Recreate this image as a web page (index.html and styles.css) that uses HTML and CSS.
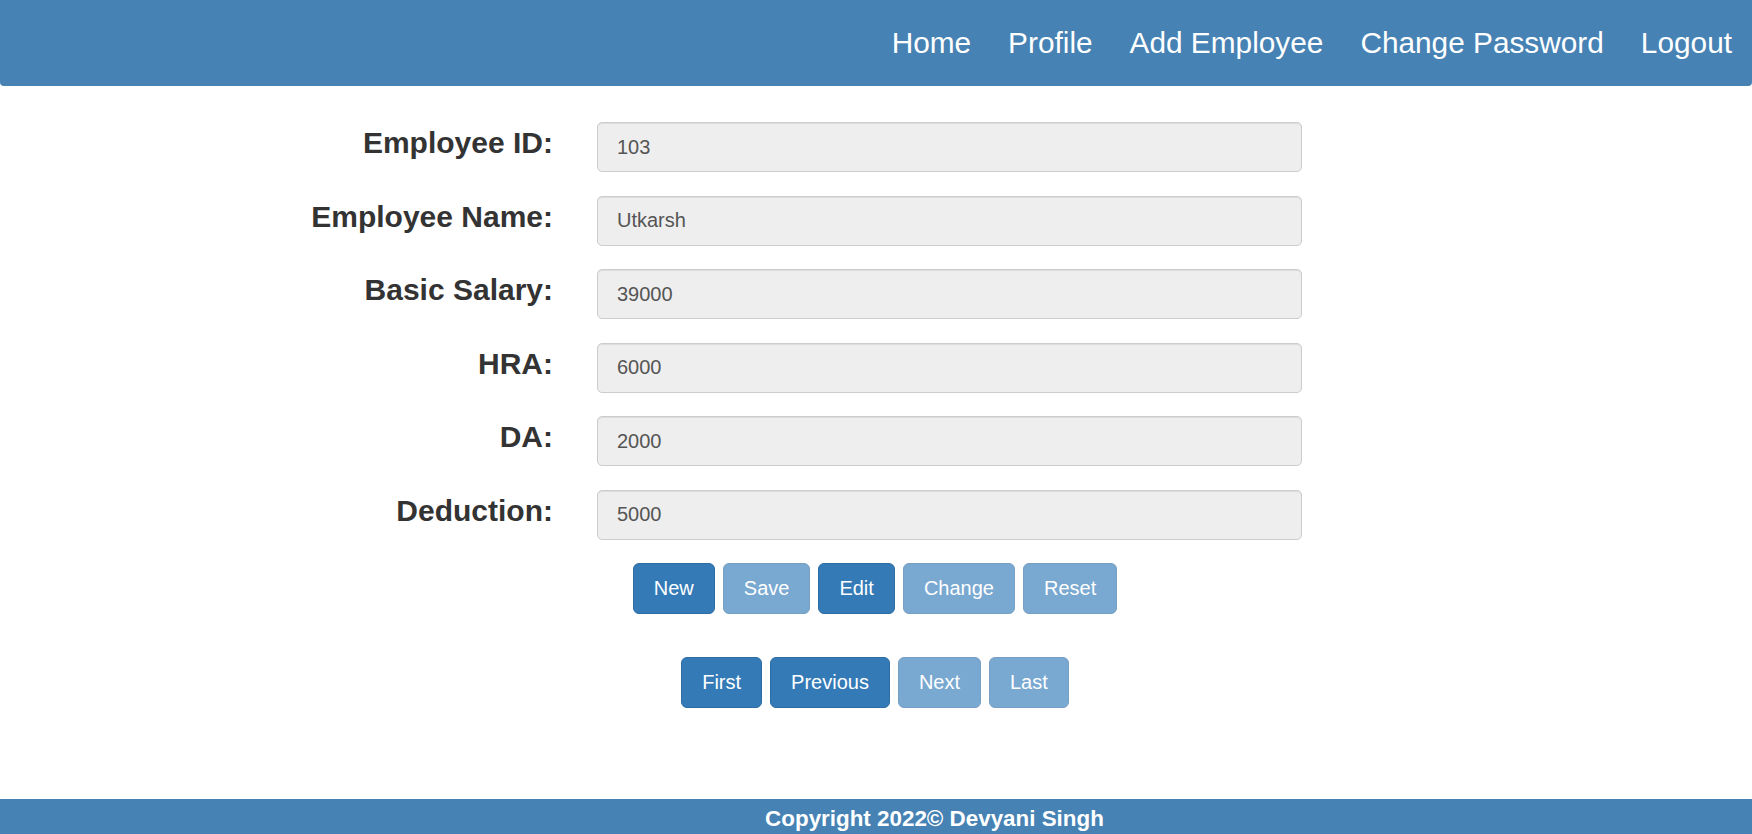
FILE: index.html
```html
<!DOCTYPE html>
<html lang="en">
<head>
<meta charset="utf-8">
<title>Employee</title>
<link rel="stylesheet" href="styles.css">
</head>
<body>
<header class="navbar">
  <nav class="nav-links">
    <a href="#">Home</a>
    <a href="#">Profile</a>
    <a href="#">Add Employee</a>
    <a href="#">Change Password</a>
    <a href="#">Logout</a>
  </nav>
</header>
<main class="content">
  <form class="emp-form">
    <div class="field"><label>Employee ID:</label><input class="input" type="text" value="103" readonly></div>
    <div class="field"><label>Employee Name:</label><input class="input" type="text" value="Utkarsh" readonly></div>
    <div class="field"><label>Basic Salary:</label><input class="input" type="text" value="39000" readonly></div>
    <div class="field"><label>HRA:</label><input class="input" type="text" value="6000" readonly></div>
    <div class="field"><label>DA:</label><input class="input" type="text" value="2000" readonly></div>
    <div class="field"><label>Deduction:</label><input class="input" type="text" value="5000" readonly></div>
  </form>
  <div class="btn-row actions">
    <button class="btn">New</button>
    <button class="btn disabled">Save</button>
    <button class="btn">Edit</button>
    <button class="btn disabled">Change</button>
    <button class="btn disabled">Reset</button>
  </div>
  <div class="btn-row pager">
    <button class="btn">First</button>
    <button class="btn">Previous</button>
    <button class="btn disabled">Next</button>
    <button class="btn disabled">Last</button>
  </div>
</main>
<footer class="footer">Copyright 2022© Devyani Singh</footer>
</body>
</html>
```
FILE: styles.css
```css
html, body {
  margin: 0;
  padding: 0;
}
body {
  font-family: "Liberation Sans", Arial, sans-serif;
  color: #333;
  background: #fff;
  overflow: hidden;
  height: 834px;
}
.navbar {
  background: #4682b4;
  height: 86px;
  border-radius: 0 0 4px 4px;
  display: flex;
  justify-content: flex-end;
  align-items: center;
  padding: 0 20px;
  box-sizing: border-box;
}
.nav-links {
  display: flex;
  gap: 37px;
}
.nav-links a {
  color: #fff;
  text-decoration: none;
  font-size: 29.8px;
  line-height: 34px;
}
.content {
  padding-top: 36px;
  height: 677px;
  box-sizing: border-box;
}
.emp-form {
  display: flex;
  flex-direction: column;
  gap: 23.6px;
  margin-left: 253px;
}
.field {
  display: flex;
  align-items: flex-start;
  gap: 44px;
}
.field label {
  width: 300px;
  text-align: right;
  font-weight: bold;
  font-size: 30px;
  line-height: 34px;
  padding-top: 4px;
  color: #333;
}
.input {
  width: 705px;
  height: 50px;
  box-sizing: border-box;
  background: #eee;
  border: 1px solid #ccc;
  border-radius: 5px;
  box-shadow: inset 0 1px 1px rgba(0,0,0,.075);
  padding: 0 19px;
  font-family: "Liberation Sans", Arial, sans-serif;
  font-size: 20px;
  color: #555;
  outline: none;
}
.btn-row {
  display: flex;
  justify-content: center;
  gap: 8px;
  padding-right: 2px;
}
.actions {
  margin-top: 23px;
}
.pager {
  margin-top: 43px;
}
.btn {
  font-family: "Liberation Sans", Arial, sans-serif;
  font-size: 20px;
  line-height: 23px;
  height: 51px;
  padding: 0 20px;
  color: #fff;
  background: #337ab7;
  border: 1px solid #2e6da4;
  border-radius: 6px;
  cursor: pointer;
}
.btn.disabled {
  opacity: .65;
  cursor: not-allowed;
}
.footer {
  margin-top: 36px;
  background: #4682b4;
  color: #fff;
  font-weight: bold;
  font-size: 22.4px;
  line-height: 26px;
  height: 35px;
  box-sizing: border-box;
  padding: 7px 0 0 117px;
  text-align: center;
  overflow: hidden;
}
```
